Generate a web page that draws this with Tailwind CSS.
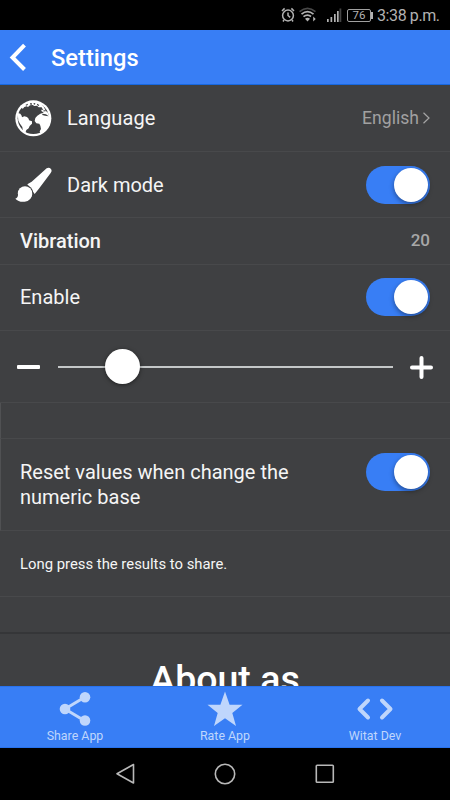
<!DOCTYPE html>
<html lang="en">
<head>
<meta charset="utf-8">
<title>Settings</title>
<script src="https://cdn.jsdelivr.net/npm/@tailwindcss/browser@4"></script>
</head>
<body class="bg-black">
<div class="w-[450px] h-[800px] overflow-hidden flex flex-col bg-[#3f4042] text-[#f5f5f5] font-['Roboto',sans-serif]">
  <div class="h-[30px] shrink-0 bg-black flex items-center text-[#b2b2b2] pl-[281px]">
    <svg class="w-[14px] h-[16px]" viewBox="0 0 14 16" fill="none" stroke="currentColor" stroke-width="1.5"><circle cx="7" cy="8.5" r="5.4"/><path d="M7 5.5v3l2.2 1.8M1 4l2.6-2.6M13 4l-2.6-2.6M3 13l-1 1.5M11 13l1 1.5"/></svg>
    <svg class="w-[17px] h-[16px] ml-[4px]" viewBox="0 0 17 16" fill="none" stroke="currentColor" stroke-width="1.7"><path stroke="#484848" d="M.5 4.7Q8.500-2 16.500 4.700"/><path d="M2.500 7.200Q8.500 2 14.500 7.200M4.500 9.700Q8.500 6.500 12 9.500"/><path fill="currentColor" stroke="none" d="M6 11.700Q8.500 10 11 11.700L8.500 14.500ZM14.200 9.500l2.500 2.500-2.500 2.500Z"/></svg>
    <svg class="w-[15px] h-[15px] ml-[11px]" viewBox="0 0 15 15" fill="currentColor"><path d="M0 11h1.700v3H0zM3.500 9h1.700v5H3.500zM7 6h1.700v8H7zM10 3h1.700v11H10z"/><path fill="#444" d="M12.500.500h1.800V14h-1.800z"/></svg>
    <div class="ml-[5px] w-[24px] h-[13px] border border-[#a0a0a0] rounded-[2px] text-[11.500px] leading-[11.500px] text-center">76</div>
    <div class="w-[2px] h-[7px] bg-[#b2b2b2]"></div>
    <div class="ml-[4px] text-[16px] leading-5 whitespace-nowrap tracking-[-0.400px] pt-[2px]">3:38 p.m.</div>
  </div>
  <div class="h-[55px] shrink-0 bg-[#387ef5] border-b border-[#1768e0] flex items-center pl-[9px]">
    <svg class="w-[18px] h-[28px]" viewBox="0 0 18 28" fill="none" stroke="#fff" stroke-width="4"><path d="M15.500 2.200L3.500 14.500l12 12"/></svg>
    <h1 class="ml-[24px] pt-px text-[23.700px] leading-7 font-medium text-white">Settings</h1>
  </div>
  <main class="flex-1 min-h-0 overflow-hidden">
    <div class="h-[67px] border-b border-[#48494b] flex items-center pl-[15px] pr-[20px]">
      <svg class="w-[37px] h-[37px]" viewBox="10 7 111 111" fill="#fff"><circle cx="65" cy="62" r="54"/><circle cx="65" cy="62" r="47" fill="#3f4042"/><path d="M65 11C48 11 34 19 26 32l5-2 2 4 5-6 7-2 4 2 6-5 8-1 5 3 8-1 5 5 9 0 4 7 8 3C96 23 83 11 65 11Z"/><path fill="#3f4042" d="M42 21l7-3-1 4-5 2ZM55 17l5-1 1 5-5 0ZM66 16l5 1-1 4-4-1ZM76 18l7 4-2 3-5-3Z"/><path d="M18 46l8 2 4 6 1 5 7-3 8 2 5 5 1 5 9 3 0 7-7 7-3 7-7 5-3 9-7-3-2-15-7-10-5-9ZM86 48l7-2 7-6 7 2 6 14 2 13-4 16-8 12-9 8-8 2-2-6 4-7-2-10-3-6-9-1-5-7 2-9 6-7ZM88 36l7 1 3 5-7 0Z"/><path fill="#3f4042" d="M92 48l11 2 8 6-11-2-8-2Z"/></svg>
      <span class="ml-[15px] text-[20px] tracking-[0.100px]">Language</span>
      <span class="ml-auto text-[17.600px] text-[#a1a1a1]">English</span>
      <svg class="w-[8px] h-[12px] ml-[3px]" viewBox="0 0 8 12" fill="none" stroke="#a5a5a5" stroke-width="1.200"><path d="M1.500 .8L7 6l-5.500 5.200"/></svg>
    </div>
    <div class="h-[66px] border-b border-[#48494b] flex items-center pl-[15px] pr-[20px]">
      <svg class="w-[37px] h-[36px]" viewBox="46 144 111 108" fill="#fff"><path d="M141 148q7-5 13 2 4 6-1 12L117 210l-12 15-22-29 13-8Z"/><circle cx="76" cy="223" r="25" fill="#3f4042"/><circle cx="76" cy="223" r="21.500"/><path d="M55 224q1 12-8 15 10 11 28 9 20-2 23-23Z"/></svg>
      <span class="ml-[15px] text-[20px]">Dark mode</span>
      <div class="ml-auto w-[64px] h-[38px] rounded-full bg-[#387ef5] p-[2px] flex justify-end"><div class="w-[34px] h-[34px] rounded-full bg-white shadow-[0_2px_5px_rgba(0,0,0,0.4)]"></div></div>
    </div>
    <div class="h-[47px] border-b border-[#48494b] flex items-center px-[20px] justify-between">
      <span class="text-[20px] font-medium">Vibration</span><span class="text-[17px] font-medium text-[#a8a8a8]">20</span>
    </div>
    <div class="h-[66px] border-b border-[#48494b] flex items-center px-[20px] justify-between pb-[2px]">
      <span class="text-[20px]">Enable</span>
      <div class="w-[64px] h-[38px] rounded-full bg-[#387ef5] p-[2px] flex justify-end"><div class="w-[34px] h-[34px] rounded-full bg-white shadow-[0_2px_5px_rgba(0,0,0,0.4)]"></div></div>
    </div>
    <div class="h-[72px] border-b border-[#48494b] flex items-center pl-[17px] pr-[17px] pt-px">
      <div class="w-[23px] h-[4px] rounded-[1px] bg-white"></div>
      <div class="relative ml-[18px] w-[335px] h-[2px] bg-[#c4c7c8]"><div class="absolute left-[47px] -top-[17px] w-[35px] h-[35px] rounded-full bg-white shadow-[0_1px_4px_rgba(0,0,0,0.5)]"></div></div>
      <svg class="ml-auto w-[23px] h-[23px]" viewBox="0 0 23 23" stroke="#fff" stroke-width="4" stroke-linecap="round"><path d="M2 11.500h19M11.500 2v19"/></svg>
    </div>
    <div class="h-[36px] border-b border-l border-b-[#48494b] border-l-[#505153]"></div>
    <div class="h-[92px] border-b border-l border-b-[#48494b] border-l-[#505153] flex justify-between pl-[19px] pr-[20px] pt-[14px]">
      <p class="w-[290px] pt-[7px] text-[20px] leading-[25px]">Reset values when change the numeric base</p>
      <div class="w-[64px] h-[38px] rounded-full bg-[#387ef5] p-[2px] flex justify-end"><div class="w-[34px] h-[34px] rounded-full bg-white shadow-[0_2px_5px_rgba(0,0,0,0.4)]"></div></div>
    </div>
    <div class="h-[66px] border-b border-[#48494b] flex items-center px-[20px] pt-[2px] text-[14.850px]">Long press the results to share.</div>
    <div class="h-[37px] border-b-2 border-[#353638]"></div>
    <h2 class="pt-[21px] text-center text-[37.500px] leading-[48px] font-medium text-white">About as</h2>
  </main>
  <nav class="h-[62px] shrink-0 bg-[#387ef5] border-t border-b border-t-[#2872ed] border-b-[#2872ed] grid grid-cols-3 text-[12.400px] leading-[15px] text-[#bfd6fc]">
    <div class="flex flex-col items-center pt-[4px]"><svg class="w-[32px] h-[36px]" viewBox="0 0 32 36" fill="currentColor"><path d="M6 18L26 6M6 18l20 12" stroke="currentColor" stroke-width="3"/><circle cx="6" cy="18" r="5.300"/><circle cx="26" cy="6.300" r="5.300"/><circle cx="26" cy="29.500" r="5.300"/></svg><span class="mt-[1px]">Share App</span></div>
    <div class="flex flex-col items-center pt-[4px]"><svg class="w-[36px] h-[36px]" viewBox="0 0 36 36" fill="currentColor"><path d="M18 .5l4.600 13.200h12.900L25.300 22l3.700 13-11-7.800L7 35l3.700-13L.5 13.700h12.900Z"/></svg><span class="mt-[1px]">Rate App</span></div>
    <div class="flex flex-col items-center pt-[4px]"><svg class="w-[38px] h-[36px]" viewBox="0 0 38 36" fill="none" stroke="currentColor" stroke-width="4" stroke-linecap="round" stroke-linejoin="round"><path d="M12 9.500L3.500 18l8.500 8.500M26 9.500l8.500 8.500-8.500 8.500"/></svg><span class="mt-[1px]">Witat Dev</span></div>
  </nav>
  <div class="h-[52px] shrink-0 bg-black grid grid-cols-[116px_19px_79px_22px_79px_20px]">
    <svg class="col-start-2 mt-[15px] w-[19px] h-[22px]" viewBox="0 0 19 22" fill="none" stroke="#b8b8b8" stroke-width="1.600" stroke-linejoin="round"><path d="M17.500 1.500v18.500L1 10.700Z"/></svg>
    <svg class="col-start-4 mt-[15px] w-[22px] h-[22px]" viewBox="0 0 22 22" fill="none" stroke="#b8b8b8" stroke-width="1.600"><circle cx="11" cy="11" r="9.700"/></svg>
    <svg class="col-start-6 mt-[15px] w-[20px] h-[22px]" viewBox="0 0 20 22" fill="none" stroke="#b8b8b8" stroke-width="1.600"><rect x="1.300" y="2.200" width="17" height="17" rx=".8"/></svg>
  </div>
</div>
</body>
</html>
